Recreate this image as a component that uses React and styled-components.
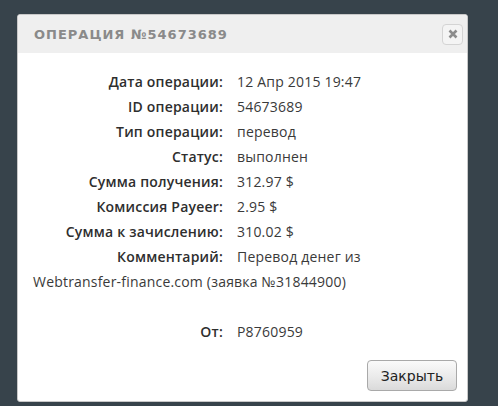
import React from "react";
import styled, { createGlobalStyle } from "styled-components";

const Global = createGlobalStyle`
  html, body { margin: 0; padding: 0; }
  body {
    background: #37434b;
    width: 498px;
    height: 406px;
    overflow: hidden;
    font-family: "Open Sans", "DejaVu Sans", sans-serif;
  }
`;

const Page = styled.div`
  padding: 14px 0 0 17px;
`;

const Dialog = styled.div`
  width: 451px;
  height: 388px;
  box-sizing: border-box;
  background: #fff;
  border: 1px solid #c8c8c8;
  border-radius: 3px;
  display: flex;
  flex-direction: column;
  overflow: hidden;
`;

const Header = styled.div`
  height: 38px;
  flex: none;
  background: #efefef;
  display: flex;
  align-items: center;
  justify-content: space-between;
  padding: 0 4px 0 16px;
`;

const Title = styled.div`
  font-family: "DejaVu Sans", sans-serif;
  font-weight: bold;
  font-size: 13px;
  letter-spacing: 1px;
  color: #8a8a8a;
`;

const CloseBtn = styled.button`
  width: 21px;
  height: 21px;
  padding: 0;
  border: 1px solid #d4d4d4;
  border-radius: 4px;
  background: #f4f4f4;
  display: flex;
  align-items: center;
  justify-content: center;
`;

const Body = styled.div`
  flex: 1;
  padding: 16px 15px 0 15px;
  font-size: 14px;
  line-height: 25px;
  color: #333;
  letter-spacing: 0.2px;
`;

const Line = styled.div``;

const Label = styled.span`
  display: inline-block;
  width: 190px;
  text-align: right;
  margin-right: 14px;
  font-weight: 600;
  color: #2e2e2e;
`;

const Value = styled.span`
  color: #3a3a3a;
`;

const NoWrap = styled.span`
  white-space: nowrap;
`;

const Spacer = styled.div`
  height: 25px;
`;

const Footer = styled.div`
  display: flex;
  justify-content: flex-end;
  padding: 0 10px 10px 0;
`;

const Button = styled.button`
  width: 90px;
  height: 31px;
  font-family: "DejaVu Sans", sans-serif;
  font-size: 14px;
  color: #222;
  border: 1px solid #a9a9a9;
  border-radius: 4px;
  background: linear-gradient(#fafafa, #eaeaea 55%, #dadada);
  padding: 0;
`;

const rows = [
  ["Дата операции:", "12 Апр 2015 19:47"],
  ["ID операции:", "54673689"],
  ["Тип операции:", "перевод"],
  ["Статус:", "выполнен"],
  ["Сумма получения:", "312.97 $"],
  ["Комиссия Payeer:", "2.95 $"],
  ["Сумма к зачислению:", "310.02 $"],
];

export default function App() {
  return (
    <>
      <Global />
      <Page>
        <Dialog>
          <Header>
            <Title>ОПЕРАЦИЯ №54673689</Title>
            <CloseBtn aria-label="close">
              <svg width="10" height="10" viewBox="0 0 10 10">
                <path d="M1.5 1.5 L8.5 8.5 M8.5 1.5 L1.5 8.5" stroke="#8c8c8c" strokeWidth="2.6" strokeLinecap="butt" />
              </svg>
            </CloseBtn>
          </Header>
          <Body>
            {rows.map(([l, v]) => (
              <Line key={l}>
                <Label>{l}</Label>
                <Value>{v}</Value>
              </Line>
            ))}
            <Line>
              <Label>Комментарий:</Label>
              <Value>
                Перевод денег из <NoWrap>Webtransfer-finance.com</NoWrap> (заявка №31844900)
              </Value>
            </Line>
            <Spacer />
            <Line>
              <Label>От:</Label>
              <Value>P8760959</Value>
            </Line>
          </Body>
          <Footer>
            <Button>Закрыть</Button>
          </Footer>
        </Dialog>
      </Page>
    </>
  );
}
